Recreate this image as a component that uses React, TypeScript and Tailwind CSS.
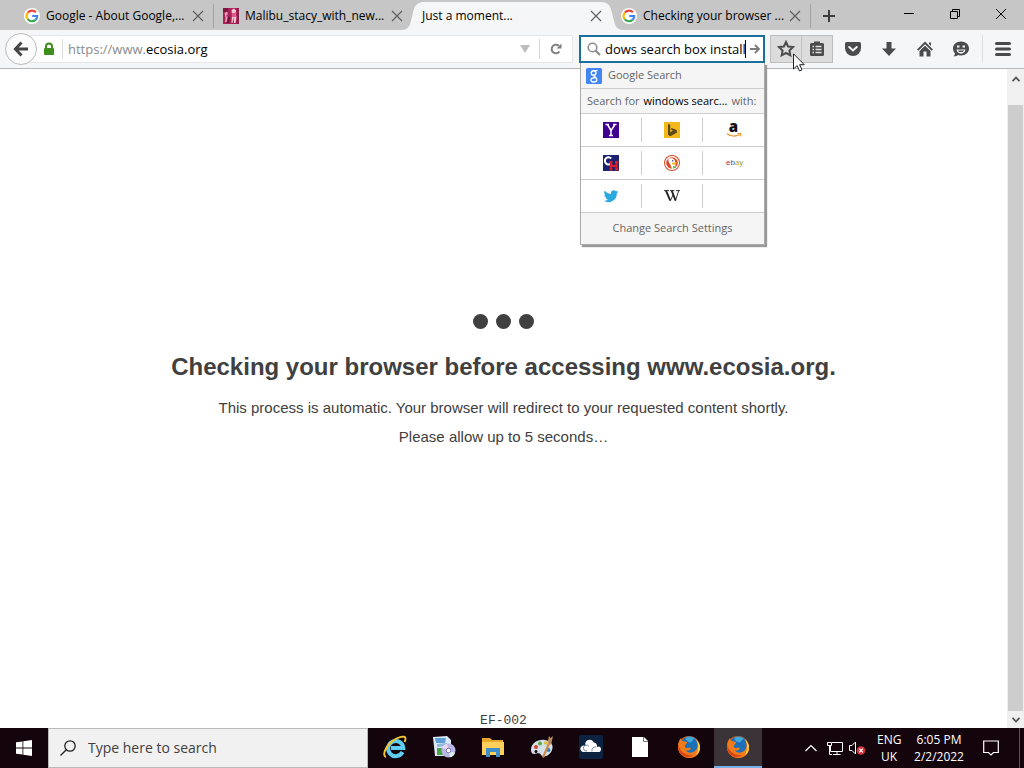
import type { ReactNode } from "react";

const UI = "font-['Open_Sans','Noto_Sans',sans-serif]";

function GoogleG() {
  return (
    <svg viewBox="0 0 16 16" className="size-4 shrink-0" fill="none">
      <circle cx="8" cy="8" r="8" fill="#fff" />
      <path d="M3.8 4.7A5.3 5.3 0 0 1 11.9 4.3" stroke="#ea4335" strokeWidth="2.2" />
      <path d="M3.7 11.1A5.3 5.3 0 0 1 3.8 4.7" stroke="#fbbc05" strokeWidth="2.2" />
      <path d="M11.5 11.9A5.3 5.3 0 0 1 3.7 11.1" stroke="#34a853" strokeWidth="2.2" />
      <path d="M8.2 8H13.2A5.3 5.3 0 0 1 11.5 11.9" stroke="#4285f4" strokeWidth="2.2" />
    </svg>
  );
}

function MalibuIcon() {
  return (
    <svg viewBox="0 0 16 16" className="size-4 shrink-0">
      <path d="M0 0H16V16H0Z" fill="#a92358" />
      <path d="M0 0H5V4H0Z" fill="#7d1740" />
      <path d="M1.5 5L4 3.5 5 6 3 8 5 9 3.5 14H2L2.5 10Z" fill="#e79ab5" />
      <path d="M5 8L7 10 6 15H4Z" fill="#6b1237" />
      <path d="M8.5 2L11 0.5 13 2.5 12.5 6 13.5 9 12.5 15H11L10.5 9 9.5 15H8.5L9 7Z" fill="#f6c6d2" />
      <path d="M9 5H12.5L13 9H9Z" fill="#e0568a" />
      <path d="M14 0H16V16H14Z" fill="#8c1d4a" />
    </svg>
  );
}

function Cross({ label }: { label: string }) {
  return (
    <button aria-label={label} className="flex size-4 shrink-0 items-center justify-center">
      <svg viewBox="0 0 12 12" className="size-3" stroke="#5c5c5c" strokeWidth="1.1">
        <path d="M1 1L11 11M11 1L1 11" />
      </svg>
    </button>
  );
}

function Tab({ icon, title, active, divider }: { icon?: ReactNode; title: string; active?: boolean; divider?: boolean }) {
  return (
    <div
      role="tab"
      aria-selected={!!active}
      className="relative flex h-full min-w-0 max-w-[199px] flex-1 items-center pt-0.5 pr-2 pl-[9px]"
    >
      {active && (
        <div className="absolute inset-y-0 -right-3 -left-3 flex">
          <svg viewBox="0 0 24 30" className="h-[30px] w-6 shrink-0">
            <path d="M0 30C9 30 9 24 11 17C13 9 13 2 24 2V30Z" fill="#f5f6f7" />
          </svg>
          <div className="mt-0.5 flex-1 bg-[#f5f6f7]" />
          <svg viewBox="0 0 24 30" className="h-[30px] w-6 shrink-0">
            <path d="M24 30C15 30 15 24 13 17C11 9 11 2 0 2V30Z" fill="#f5f6f7" />
          </svg>
        </div>
      )}
      {icon}
      <span className={"relative flex-1 whitespace-nowrap text-[12px] leading-4 text-black " + (icon ? "ml-1.5" : "")}>{title}</span>
      <span className="relative flex">
        <Cross label={"Close " + title} />
      </span>
      {divider && <span className="absolute top-1 right-0 h-6 w-px bg-[#a3a3a3]" />}
    </div>
  );
}

function TabBar() {
  return (
    <header className="flex h-[30px] shrink-0 items-stretch bg-[#c6c6c6]">
      <div role="tablist" className="flex min-w-0 flex-1 items-stretch pl-[15px]">
        <Tab icon={<GoogleG />} title="Google - About Google,..." divider />
        <Tab icon={<MalibuIcon />} title="Malibu_stacy_with_new..." />
        <Tab title="Just a moment..." active />
        <Tab icon={<GoogleG />} title="Checking your browser ..." divider />
        <button aria-label="New tab" className="flex w-9 shrink-0 items-center justify-center pt-0.5">
          <svg viewBox="0 0 12 12" className="size-3" stroke="#3c3c3c" strokeWidth="2">
            <path d="M6 0V12M0 6H12" />
          </svg>
        </button>
      </div>
      <div className="flex">
        <button aria-label="Minimize" className="flex h-7 w-[46px] items-center justify-center">
          <svg viewBox="0 0 10 10" className="size-2.5" stroke="#000"><path d="M0 4.5H10" /></svg>
        </button>
        <button aria-label="Restore" className="flex h-7 w-[46px] items-center justify-center">
          <svg viewBox="0 0 10 10" className="size-2.5" stroke="#000" fill="none"><path d="M.5 2.5H7.5V9.5H.5ZM2.5 2.5V.5H9.5V7.5H7.5" /></svg>
        </button>
        <button aria-label="Close window" className="flex h-7 w-[46px] items-center justify-center">
          <svg viewBox="0 0 10 10" className="size-2.5" stroke="#000"><path d="M0 0L10 10M10 0L0 10" /></svg>
        </button>
      </div>
    </header>
  );
}

function Engine({ name, last, children }: { name?: string; last?: boolean; children?: ReactNode }) {
  return (
    <div className="flex h-[33px] items-center border-b border-[#ccc]">
      {name ? (
        <button aria-label={name} className="flex flex-1 justify-center">
          <svg viewBox="0 0 16 16" className="size-4 overflow-visible">{children}</svg>
        </button>
      ) : (
        <span className="flex-1" />
      )}
      {!last && <span className="h-6 w-px bg-[#ccc]" />}
    </div>
  );
}

function SearchPanel() {
  return (
    <div className="absolute top-[26px] -right-0.5 -left-px z-10 border border-[#aaa] border-t-0 bg-white text-[11px] text-[#666] shadow-[2px_2px_1px_#999]">
      <div className="flex h-[26px] items-center gap-1.5 border-b border-[#ccc] bg-[#f5f5f5] px-[5px]">
        <svg viewBox="0 0 16 16" className="size-4">
          <rect width="16" height="16" rx="1.5" fill="#4285f4" />
          <g fill="none" stroke="#fff" strokeWidth="1.4">
            <circle cx="7.6" cy="5" r="2.3" />
            <path d="M8 2.6H11.5M8.5 7.2C6.5 8.4 10.8 9 10.8 11.7C10.8 14.8 5 14.8 5 12C5 10 7 9.6 8.8 9.7" />
          </g>
        </svg>
        <span>Google Search</span>
      </div>
      <div className="flex h-[25px] items-center gap-1 whitespace-nowrap border-b border-[#ccc] bg-[#f5f5f5] px-1.5">
        <span>Search for</span>
        <span className="text-black">windows searc...</span>
        <span>with:</span>
      </div>
      <div className="grid grid-cols-3">
        <Engine name="Yahoo">
          <path d="M0 0H16V16H0Z" fill="#400090" />
          <path d="M2.500 2.500H6M10 2.500H13.500M4.500 2.500L8 8.500L12 2.500M8 8V13.500M6 13.500H10" stroke="#fff" strokeWidth="1.500" fill="none" />
        </Engine>
        <Engine name="Bing">
          <path d="M0 0H16V16H0Z" fill="#f5b81b" />
          <path d="M4 2L6.200 2.800V10.200L9 8.700L7.600 8L6.800 5.800L12.800 8V10.800L6.300 14.200L4 12.800Z" fill="#5b4a1a" />
        </Engine>
        <Engine name="Amazon" last>
          <text x="7.500" y="10" textAnchor="middle" fontSize="15" fontWeight="800" fontFamily="Open Sans, sans-serif" fill="#111">a</text>
          <path d="M1 11.500C5 14.800 10 14.600 13.200 12.500M11.500 11.500H14.800C14.800 13 14.300 13.800 13.700 14.300" stroke="#e5982d" strokeWidth="1.200" fill="none" />
        </Engine>
        <Engine name="Chambers">
          <path d="M0 0H16V16H0Z" fill="#1b2270" />
          <path d="M8.200 3.500A3.600 3.600 0 1 0 8.200 8.200" stroke="#fff" strokeWidth="2.100" fill="none" />
          <path d="M8 7V14.500M13.500 7V14.500M8 10.800H13.500M6.500 7.200H9.500M12 7.200H15.500M6.500 14.300H9.500M12 14.300H15.500" stroke="#d81f2a" strokeWidth="2.200" fill="none" />
        </Engine>
        <Engine name="DuckDuckGo">
          <circle cx="8" cy="8" r="8" fill="#d64a26" />
          <circle cx="8" cy="8" r="6.400" fill="none" stroke="#fff" strokeWidth="1.200" />
          <path d="M4.500 3.200L8 3.200C10.800 4 11.500 6 11.200 8.200L11.800 13L8 14L6.300 9.500C4.500 7 4 5 4.500 3.200Z" fill="#fff" />
          <path d="M8 7.700L12.800 7.200L12 9.200L8.300 9.700Z" fill="#f6b51e" />
          <path d="M9 11L12 11.500V13L9 13.200Z" fill="#65bc46" />
          <circle cx="8.700" cy="5.800" r=".8" fill="#2d4f8e" />
        </Engine>
        <Engine name="eBay" last>
          <text y="10" fontSize="8" fontFamily="Liberation Sans, sans-serif">
            <tspan x="0" fill="#b3324b">e</tspan><tspan fill="#4758a5">b</tspan><tspan fill="#c9a227">a</tspan><tspan fill="#7fa32b">y</tspan>
          </text>
        </Engine>
        <Engine name="Twitter">
          <path d="M15.300 3.600c-.5.300-1.100.4-1.700.5.600-.4 1.100-1 1.300-1.600-.6.300-1.200.6-1.900.7a3 3 0 0 0-5.100 2.700A8.500 8.500 0 0 1 1.700 2.800a3 3 0 0 0 .9 4C2.100 6.800 1.700 6.600 1.300 6.400c0 1.400 1 2.700 2.400 3-.5.100-.9.100-1.300 0 .4 1.200 1.500 2 2.800 2.100A6 6 0 0 1 .7 12.800 8.500 8.500 0 0 0 13.800 5.200c.6-.4 1.100-1 1.500-1.600Z" fill="#2aa9e0" />
        </Engine>
        <Engine name="Wikipedia">
          <path d="M0 2.600H5M6 2.600H10.500M12 2.600H16" stroke="#222" strokeWidth=".9" />
          <path d="M2 2.600L6.200 12.500M7.700 2.600L11.500 12.500" stroke="#222" strokeWidth="1.900" />
          <path d="M6.200 13L9 7M11.400 13L14.700 2.600" stroke="#222" strokeWidth=".9" />
        </Engine>
        <Engine last />
      </div>
      <button className="flex h-[31px] w-full items-center justify-center bg-[#f5f5f5]">Change Search Settings</button>
    </div>
  );
}

function ToolButton({ label, children, className = "w-9" }: { label: string; children: ReactNode; className?: string }) {
  return (
    <button aria-label={label} className={"flex h-full items-center justify-center " + className}>
      <svg viewBox="0 0 18 18" className="size-[18px]" fill="#4b4b4b">{children}</svg>
    </button>
  );
}

function NavBar() {
  return (
    <nav className="flex h-[39px] shrink-0 items-center border-b border-[#b6b6b6] bg-[#f5f6f7]">
      <div className="flex min-w-0 flex-1 items-center pl-[5px]">
        <button aria-label="Back" className="z-10 flex size-8 shrink-0 items-center justify-center rounded-full border border-[#bcbcbc] bg-[#fbfbfb]">
          <svg viewBox="0 0 16 16" className="size-4" fill="none" stroke="#444" strokeWidth="2.800">
            <path d="M15 8H3M8.500 1.500L2.300 8L8.500 14.500" />
          </svg>
        </button>
        <div className="-ml-2 flex h-7 min-w-0 flex-1 items-center border border-[#e6e6e6] bg-white pl-[13px]">
          <svg viewBox="0 0 12 14" className="h-3.5 w-3 shrink-0">
            <path d="M3 7V4.500A3 3 0 0 1 9 4.500V7" fill="none" stroke="#3f8d1d" strokeWidth="2" />
            <rect x="1" y="6" width="10" height="7" rx="1" fill="#3f8d1d" />
          </svg>
          <span className="mr-[5px] ml-[7px] h-5 w-px bg-[#ddd]" />
          <label className="flex min-w-0 flex-1 items-center text-[13px] leading-5">
            <span className="text-[#8a8a8a]">https://www.</span>
            <input aria-label="Address" defaultValue="ecosia.org" className="min-w-0 flex-1 bg-transparent text-black outline-none" />
          </label>
          <button aria-label="History" className="flex w-7 justify-center">
            <svg viewBox="0 0 10 8" className="h-2 w-2.5"><path d="M0 0H10L5 8Z" fill="#bdbdbd" /></svg>
          </button>
          <span className="h-5 w-px bg-[#d6d6d6]" />
          <button aria-label="Reload" className="flex w-8 justify-center">
            <svg viewBox="0 0 12 12" className="size-3">
              <path d="M9.500 8.500A4.300 4.300 0 1 1 8.800 2.800" fill="none" stroke="#808080" strokeWidth="2" />
              <path d="M6.500 5.500H11.500V.5Z" fill="#808080" />
            </svg>
          </button>
        </div>
      </div>
      <div className="relative ml-1.5 h-7 w-[186px] shrink-0 border-2 border-[#1b6f9f] bg-white">
        <div className="flex h-full items-center pl-1.5">
          <svg viewBox="0 0 14 14" className="size-3.5 shrink-0" fill="none" stroke="#8c8c8c">
            <circle cx="5.500" cy="5.500" r="4.300" strokeWidth="1.600" />
            <path d="M8.700 8.700L13 13" strokeWidth="2.200" />
          </svg>
          <input aria-label="Search" defaultValue="dows search box install" className="ml-1 w-0 min-w-0 flex-1 bg-transparent text-right text-[13px] leading-5 text-black outline-none" />
          <span className="h-[18px] w-px bg-black" />
          <button aria-label="Go" className="flex w-[17px] justify-center">
            <svg viewBox="0 0 10 10" className="size-2.5" fill="none" stroke="#7b7b7b" strokeWidth="1.800"><path d="M0 5H8.500M5 1L9 5L5 9" /></svg>
          </button>
        </div>
        <SearchPanel />
      </div>
      <div className="ml-[5px] flex h-7 shrink-0 border border-[#bdbdbd] bg-[#dcdcdc]">
        <div className="relative">
          <ToolButton label="Bookmark this page" className="w-[31px] border-r border-[#c4c4c4]">
            <path d="M9 2L11.100 6.500L16 7.100L12.400 10.500L13.300 15.400L9 13L4.700 15.400L5.600 10.500L2 7.100L6.900 6.500Z" fill="none" stroke="#4b4b4b" strokeWidth="2" />
          </ToolButton>
          <svg viewBox="0 0 12 19" className="absolute top-[17px] left-[22px] z-20 h-[19px] w-3">
            <path d="M.5 .8V16L4.100 12.600L6.500 18L9 16.900L6.600 11.700H11.300Z" fill="#fff" stroke="#222" />
          </svg>
        </div>
        <ToolButton label="Show bookmarks" className="w-[30px]">
          <path d="M3.500 3H6V1.500H12V3H14.500Q16 3 16 4.500V14.500Q16 16 14.500 16H3.500Q2 16 2 14.500V4.500Q2 3 3.500 3Z" />
          <path d="M4.500 6.500H6M7.500 6.500H13.500M4.500 9.500H6M7.500 9.500H13.500M4.500 12.500H6M7.500 12.500H13.500" stroke="#e0e0e0" strokeWidth="1.500" />
        </ToolButton>
      </div>
      <div className="ml-0.5 flex h-7 shrink-0 items-center">
        <ToolButton label="Pocket">
          <path d="M2.500 2H15.500Q17 2 17 3.500V8A8 8 0 0 1 1 8V3.500Q1 2 2.500 2Z" />
          <path d="M5.200 7L9 10.500L12.800 7" fill="none" stroke="#f5f6f7" strokeWidth="2" strokeLinecap="round" />
        </ToolButton>
        <ToolButton label="Downloads">
          <path d="M6.500 2H11.500V8.500H16L9 16L2 8.500H6.500Z" />
        </ToolButton>
        <ToolButton label="Home">
          <path d="M9 1.500L17 9.500L15.700 10.800L9 4.300L2.300 10.800L1 9.500ZM13 2.500H15V6L13 4Z" />
          <path d="M9 5.700L14.500 11V16.500H10.500V11.500H7.500V16.500H3.500V11Z" />
        </ToolButton>
        <ToolButton label="Chat">
          <path d="M9 1.500C13.600 1.500 17 4.500 17 8.500S13.600 15.500 9 15.500C8 15.500 7 15.400 6.200 15C5 16 3.300 16.500 1.500 16.300C2.600 15.500 3 14.500 2.900 13.300C1.700 12 1 10.400 1 8.500C1 4.500 4.400 1.500 9 1.500Z" />
          <path d="M5 6.500H7.500M10.500 6.500H13" stroke="#f5f6f7" strokeWidth="2" />
          <path d="M4.500 9.500H13.500C13.200 15 4.800 15 4.500 9.500Z" fill="#f5f6f7" />
          <path d="M6 10.500H12C11.500 12.500 6.500 12.500 6 10.500Z" />
        </ToolButton>
        <span className="ml-[3px] h-7 w-px bg-[#dfdfdf]" />
        <ToolButton label="Menu" className="mr-px w-10">
          <path d="M2.500 3.500H15.500M2.500 9H15.500M2.500 14.500H15.500" stroke="#4b4b4b" strokeWidth="3" strokeLinecap="round" />
        </ToolButton>
      </div>
    </nav>
  );
}

function Scrollbar() {
  return (
    <div className="flex w-[17px] shrink-0 flex-col items-center bg-[#f0f0f0]">
      <button aria-label="Scroll up" className="flex h-[19px] w-full items-center justify-center">
        <svg viewBox="0 0 8 6" className="h-1.5 w-2" fill="none" stroke="#505050" strokeWidth="1.800"><path d="M.5 5.200L4 1.500L7.500 5.200" /></svg>
      </button>
      <div className="mt-[17px] w-[15px] flex-1 bg-[#cdcdcd]" />
      <button aria-label="Scroll down" className="flex h-[17px] w-full items-center justify-center">
        <svg viewBox="0 0 8 6" className="h-1.5 w-2" fill="none" stroke="#505050" strokeWidth="1.800"><path d="M.5 .8L4 4.500L7.500 .8" /></svg>
      </button>
    </div>
  );
}

function Page() {
  return (
    <div className="flex min-h-0 flex-1 bg-white">
      <main className="flex flex-1 flex-col items-center overflow-hidden text-[#404040] font-['Liberation_Sans',Arial,sans-serif]">
        <div className="mt-[245px] flex gap-2">
          <span className="size-[15px] rounded-full bg-[#404040]" />
          <span className="size-[15px] rounded-full bg-[#404040]" />
          <span className="size-[15px] rounded-full bg-[#404040]" />
        </div>
        <h1 className="mt-[22px] text-[24px] leading-8 font-bold">Checking your browser before accessing www.ecosia.org.</h1>
        <p className="mt-2.5 text-[15px] leading-[29px]">This process is automatic. Your browser will redirect to your requested content shortly.</p>
        <p className="text-[15px] leading-[29px]">Please allow up to 5 seconds…</p>
        <p className="mt-auto text-[13px] leading-[14px] font-['Liberation_Mono','Courier_New',monospace]">EF-002</p>
      </main>
      <Scrollbar />
    </div>
  );
}

function Firefox() {
  return (
    <svg viewBox="0 0 24 24" className="size-6">
      <circle cx="12" cy="12" r="11" fill="#e66000" />
      <circle cx="12.500" cy="10" r="8.800" fill="#1d6fb8" />
      <path d="M8 3C11 1 16 1.500 18 4C15 4 16 7 13 7.500C10 7 9 5 8 3Z" fill="#40a9dc" />
      <path d="M18 3.500C25 9 24.500 19 17 22C11 25 2 21 1 13C.7 9 2 5 4 3C4 5 5 6 6 6L10 7C10.500 9 7.500 9 8 12C9 14 12 12 14 13C13 16 10 15.500 9 16C14 20 20 16 20.500 11C20.800 8 20 5.500 18 3.500Z" fill="#ef7b1b" />
      <path d="M18 3.500C25 9 24 17 19 20C22 14 22 8 18 3.500Z" fill="#ffd23f" />
      <path d="M1.500 9C2 16 8 21 16 20C12 24 3 22 1.200 14Z" fill="#d94417" />
    </svg>
  );
}

function TaskIcon({ label, active, children }: { label: string; active?: boolean; children: ReactNode }) {
  return (
    <button aria-label={label} className={"flex h-10 w-12 items-center justify-center border-b-2 " + (active ? "border-[#76b0e6] bg-[#3a3338]" : "border-transparent")}>
      {children}
    </button>
  );
}

function Taskbar() {
  return (
    <footer className="flex h-10 shrink-0 items-stretch bg-[#14040b] text-white">
      <button aria-label="Start" className="flex w-12 shrink-0 items-center justify-center">
        <svg viewBox="0 0 16 16" className="size-4" fill="#fff"><path d="M0 2.300L6.500 1.400V7.500H0ZM7.300 1.300L16 0V7.500H7.300ZM0 8.400H6.500V14.600L0 13.700ZM7.300 8.400H16V16L7.300 14.700Z" /></svg>
      </button>
      <label className="flex w-80 min-w-0 items-center border border-[#b9b9b9] bg-[#f1f1f1] pl-[11px]">
        <svg viewBox="0 0 16 16" className="size-4 shrink-0" fill="none" stroke="#222" strokeWidth="1.300">
          <circle cx="10" cy="6" r="5.200" />
          <path d="M6.300 9.700L.5 15.500" />
        </svg>
        <input aria-label="Type here to search" placeholder="Type here to search" className="ml-3 min-w-0 flex-1 bg-transparent text-[14px] leading-5 placeholder:text-[#404040] outline-none" />
      </label>
      <div className="ml-[3px] flex gap-px">
        <TaskIcon label="Internet Explorer">
          <svg viewBox="0 0 24 24" className="size-6" fill="none">
            <path d="M19.500 17A7.600 7.600 0 1 1 20.300 13H8" stroke="#5fcdf2" strokeWidth="4" />
            <path d="M3 22C-1 21 2 12 9 6.500C15 1.500 22 .5 22.500 3C22.800 4 22 6 21.500 7" stroke="#f4c430" strokeWidth="1.900" />
          </svg>
        </TaskIcon>
        <TaskIcon label="Programs">
          <svg viewBox="0 0 24 24" className="size-6">
            <path d="M1 2L15 1L19 5V21H3Z" fill="#dcebf7" />
            <path d="M3 3H14L13 8H4Z" fill="#5f9fd4" />
            <path d="M5 9L15 8V11L5 12Z" fill="#8cb8dc" />
            <path d="M5 13H12V20H5Z" fill="#49a044" />
            <circle cx="16.500" cy="15.500" r="7" fill="#b9b6e8" />
            <path d="M16.500 15.500L10 13A7 7 0 0 1 15 8.700Z" fill="#ebd9f4" />
            <path d="M16.500 15.500L23 18A7 7 0 0 1 18 22.300Z" fill="#dff1f4" />
            <circle cx="16.500" cy="15.500" r="2.300" fill="#fff" stroke="#7771b0" />
          </svg>
        </TaskIcon>
        <TaskIcon label="File Explorer">
          <svg viewBox="0 0 24 24" className="size-6">
            <path d="M1 3H9L11 5H22V20H1Z" fill="#e8a92a" />
            <path d="M1 7H23V20H1Z" fill="#fcd05a" />
            <path d="M5 13H19V22H15V17H9V22H5Z" fill="#3e8fc9" />
          </svg>
        </TaskIcon>
        <TaskIcon label="Paint">
          <svg viewBox="0 0 24 24" className="size-6">
            <path d="M1 15C1 8 8 4 15 5C21 6 24 10 22 15C20 21 13 23 11 20C9 17 7 19 4 19C2 19 1 17 1 15Z" fill="#d5e1e9" />
            <circle cx="6" cy="12" r="2" fill="#d74332" /><circle cx="10" cy="8.500" r="2" fill="#56a845" /><circle cx="15.500" cy="8" r="1.700" fill="#e4bc36" /><circle cx="18.500" cy="15" r="2" fill="#3a7fc5" /><circle cx="6" cy="16.500" r="1.500" fill="#14040b" />
            <path d="M12 22L18 8L20 9L14 23Z" fill="#c98a45" />
            <path d="M17.500 8L19 1L20.500 3L23 1L21 10Z" fill="#b98d61" />
          </svg>
        </TaskIcon>
        <TaskIcon label="Cloud">
          <svg viewBox="0 0 24 24" className="size-6">
            <rect width="24" height="24" rx="2" fill="#0b2341" />
            <path d="M5 17A3.300 3.300 0 1 1 6.500 11A4.500 4.500 0 0 1 14.800 7.500A4 4 0 0 1 18 12A2.700 2.700 0 1 1 19 17Z" fill="#fff" />
            <path d="M8 16A3 3 0 1 1 10 11.500M13 16.500A3.500 3.500 0 0 1 17 12" fill="none" stroke="#536d8c" strokeWidth=".8" />
          </svg>
        </TaskIcon>
        <TaskIcon label="Document">
          <svg viewBox="0 0 24 24" className="size-6"><path d="M4 2H16L20 6V22H4Z" fill="#fff" /><path d="M15.500 2V6.500H20" fill="none" stroke="#777" /></svg>
        </TaskIcon>
        <TaskIcon label="Firefox"><Firefox /></TaskIcon>
        <TaskIcon label="Firefox, current window" active><Firefox /></TaskIcon>
      </div>
      <div className="ml-auto flex shrink-0 items-center">
        <button aria-label="Show hidden icons" className="mr-2.5">
          <svg viewBox="0 0 12 8" className="h-2 w-3" fill="none" stroke="#fff" strokeWidth="1.200"><path d="M.5 7L6 1.500L11.500 7" /></svg>
        </button>
        <button aria-label="Network" className="mr-1.5">
          <svg viewBox="0 0 16 14" className="h-3.5 w-4" fill="none" stroke="#fff"><path d="M5 1.500H15.500V10.500H3.500V5M10 10.500V13M6 13.500H13.500M.5 1.500H4.500V4.500H.5ZM2.500 4.500V13.500H5" /></svg>
        </button>
        <button aria-label="Volume muted" className="mr-2.5">
          <svg viewBox="0 0 18 14" className="h-3.5 w-[18px]" fill="none">
            <path d="M.5 4.500H3L6.500 1V13L3 9.500H.5Z" stroke="#fff" />
            <circle cx="12" cy="9.500" r="4.300" fill="#d3353d" />
            <path d="M10.200 7.700L13.800 11.300M13.800 7.700L10.200 11.300" stroke="#fff" strokeWidth="1.200" />
          </svg>
        </button>
        <button className="w-6 text-center text-[12px] leading-[17px]">ENG<br />UK</button>
        <button className="ml-3 w-[52px] whitespace-nowrap text-center text-[12px] leading-[17px]">6:05 PM<br />2/2/2022</button>
        <button aria-label="Notifications" className="mr-5 ml-[18px]">
          <svg viewBox="0 0 16 16" className="size-4" fill="none" stroke="#fff" strokeWidth="1.200"><path d="M.7 1H15.300V12.500H10.500L8 15L5.500 12.500H.7Z" /></svg>
        </button>
        <span className="mr-1 h-10 w-px bg-[#5c5157]" />
      </div>
    </footer>
  );
}

export default function App() {
  return (
    <div className={"flex h-screen flex-col overflow-hidden bg-white " + UI}>
      <TabBar />
      <NavBar />
      <Page />
      <Taskbar />
    </div>
  );
}
